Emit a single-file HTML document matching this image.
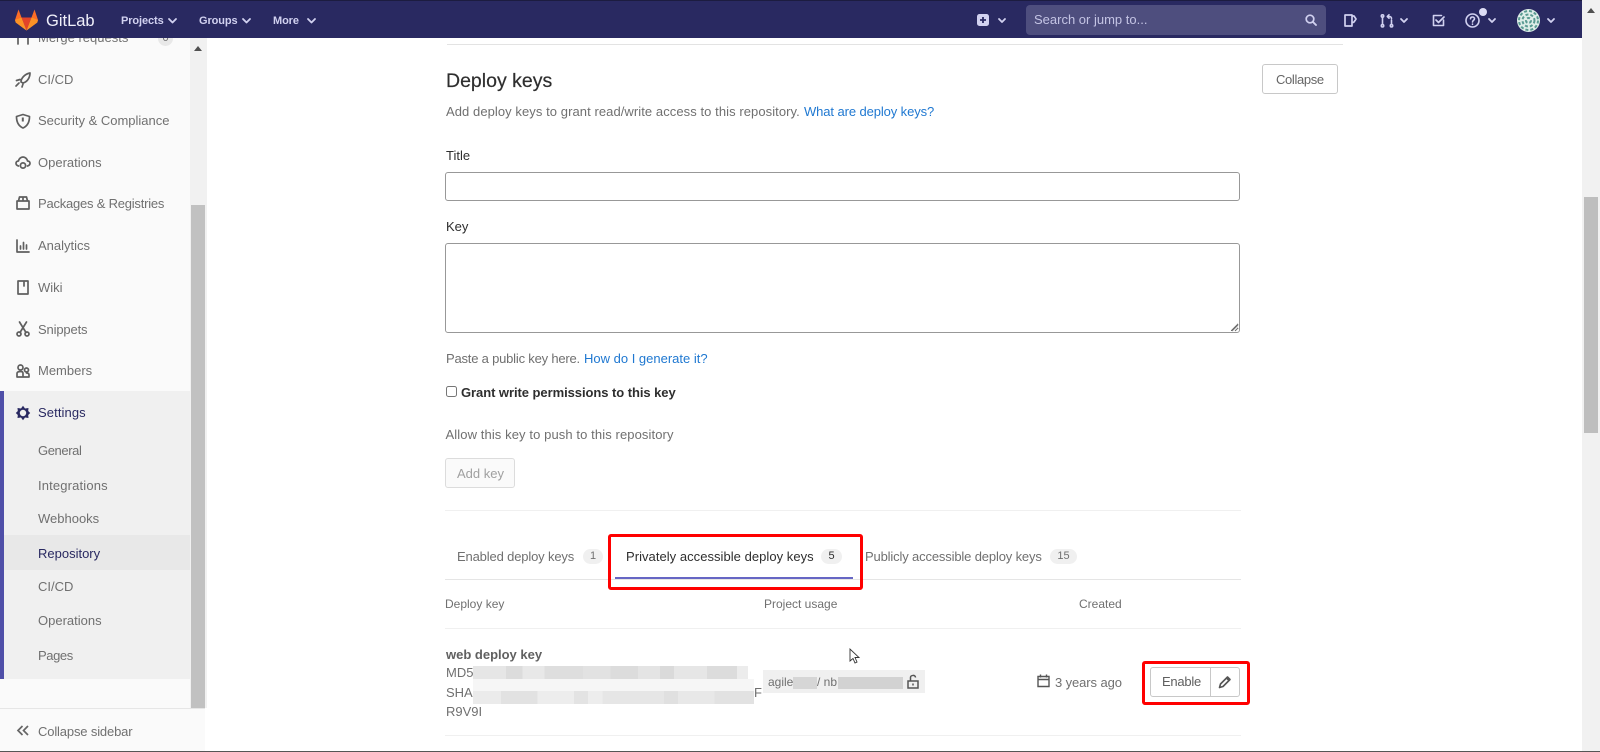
<!DOCTYPE html>
<html lang="en">
<head>
<meta charset="utf-8">
<title>Repository · Settings · GitLab</title>
<style>
*{box-sizing:border-box}
html,body{margin:0;padding:0;width:1600px;height:752px;overflow:hidden;background:#fff}
body{position:relative;font-family:"Liberation Sans",sans-serif;font-size:13px;color:#707070}
.t{position:absolute;line-height:20px;height:20px;white-space:nowrap}
a{color:#1f78d1;text-decoration:none}
svg{position:absolute;display:block;overflow:visible}
.box{position:absolute}
header{position:absolute;left:0;top:0;width:1583px;height:38px;background:#292961;border-top:1px solid #1c1c40;z-index:5}
header .t{color:#d1d1f0;font-size:11px;font-weight:bold;top:10px;letter-spacing:-.1px}
.chev{fill:none;stroke:#d1d1f0;stroke-width:1.8;stroke-linecap:round;stroke-linejoin:round}
.ic{fill:none;stroke:#d1d1f0;stroke-width:1.6;stroke-linecap:round;stroke-linejoin:round}
aside{position:absolute;left:0;top:0;width:207px;height:751px;background:#fff}
.nav{position:absolute;left:0;top:0;width:190px;height:708px;background:#fafafa}
aside .t{font-size:13px;color:#707070;left:38px}
.sn{fill:none;stroke:#5f5f5f;stroke-width:1.7;stroke-linecap:round;stroke-linejoin:round}
.main .t{font-size:13px}
input,textarea{position:absolute;margin:0;background:#fff;border:1px solid #989898;border-radius:3px;padding:0}
.hr{position:absolute;height:1px;background:#ececec}
.badge{position:absolute;height:15px;border-radius:8px;background:#f0f0f0;font-size:11px;line-height:15px;text-align:center;color:#707070}
.red{position:absolute;border:3px solid #f00;border-radius:3px;z-index:3}
</style>
</head>
<body>

<aside>
  <div class="nav"></div>
  <div class="box" style="left:0;top:391px;width:190px;height:288px;background:#f0f0f0"></div>
  <div class="box" style="left:0;top:391px;width:4px;height:288px;background:#4f4fa8"></div>
  <div class="box" style="left:4px;top:535px;width:186px;height:35px;background:#e8e8e8"></div>

  <svg style="left:16px;top:30px" width="14" height="14" viewBox="0 0 14 14"><path class="sn" d="M2 2v12M12 2v12"/></svg>
  <span class="t" style="top:28px">Merge requests</span>
  <div class="box" style="left:158px;top:31px;width:15px;height:15px;border-radius:8px;background:#e8e8e8;font-size:11px;line-height:15px;text-align:center">0</div>

  <svg style="left:15px;top:72px" width="16" height="16" viewBox="0 0 16 16"><path class="sn" d="M6 10C6 6 10 2 15 1c0 5-3 9-7 10zM1.500 8.500 5 7.500M1 14l3-3M7 15l1-3"/></svg>
  <span class="t" style="top:70px">CI/CD</span>

  <svg style="left:15px;top:113px" width="16" height="16" viewBox="0 0 16 16"><path class="sn" d="M8 1.500 14.500 3.500c0 6-2 9.500-6.500 11.500C3.500 13 1.500 9.500 1.500 3.500z"/><path d="M6.800 4.500h2v4h-2z" fill="#5f5f5f"/></svg>
  <span class="t" style="top:111px">Security &amp; Compliance</span>

  <svg style="left:15px;top:155px" width="16" height="16" viewBox="0 0 16 16"><path class="sn" d="M3.500 11C1.500 10.500 1 9.500 1 8.300 1 7 2 6 3.500 6 4 3.500 6 2 8 2s4 1.500 4.500 4C14 6 15 7 15 8.300c0 1.200-.5 2.200-2.500 2.700"/><circle cx="8" cy="10.500" r="2.600" class="sn"/></svg>
  <span class="t" style="top:153px">Operations</span>

  <svg style="left:16px;top:196px" width="14" height="14" viewBox="0 0 14 14"><path class="sn" d="M1 5h12v8H1zM2.500 5l1-4h7l1 4M7 1v4"/></svg>
  <span class="t" style="top:194px;letter-spacing:-.22px">Packages &amp; Registries</span>

  <svg style="left:16px;top:239px" width="14" height="14" viewBox="0 0 14 14"><path class="sn" d="M1 1v12h12M4.500 10V7M7.500 10V3.500M10.500 10V6"/></svg>
  <span class="t" style="top:236px">Analytics</span>

  <svg style="left:17px;top:280px" width="12" height="15" viewBox="0 0 12 15"><path class="sn" d="M1 1h10v13H1zM7 1v5"/></svg>
  <span class="t" style="top:278px">Wiki</span>

  <svg style="left:16px;top:321px" width="14" height="16" viewBox="0 0 14 16"><circle class="sn" cx="3" cy="13" r="2"/><circle class="sn" cx="11" cy="13" r="2"/><path class="sn" d="M4 11.500 10.500 1M10 11.500 3.500 1"/></svg>
  <span class="t" style="top:320px;letter-spacing:-.15px">Snippets</span>

  <svg style="left:16px;top:364px" width="14" height="14" viewBox="0 0 14 14"><circle class="sn" cx="4.500" cy="3.500" r="2.500"/><circle class="sn" cx="10.500" cy="6" r="2"/><path class="sn" d="M1 13V9.500C1 8 2.500 7.500 4.500 7.500S7 8 7 9.500V13zM7 13h6v-2c0-1.500-1-2-2.500-2"/></svg>
  <span class="t" style="top:361px">Members</span>

  <svg style="left:15px;top:405px" width="16" height="16" viewBox="0 0 16 16">
    <path d="M8 0.800 10 3.500 13.500 3 13.200 6 15.200 8 13.200 10 13.500 13 10 12.500 8 15.200 6 12.500 2.500 13 2.800 10 .8 8 2.800 6 2.500 3 6 3.500z" fill="#292961"/>
    <circle cx="8" cy="8" r="3.200" fill="#f0f0f0"/>
  </svg>
  <span class="t" style="top:403px;color:#292961;letter-spacing:.1px">Settings</span>
  <span class="t" style="top:441px;letter-spacing:-.4px">General</span>
  <span class="t" style="top:476px;letter-spacing:.15px">Integrations</span>
  <span class="t" style="top:509px">Webhooks</span>
  <span class="t" style="top:544px;color:#292961">Repository</span>
  <span class="t" style="top:577px">CI/CD</span>
  <span class="t" style="top:611px">Operations</span>
  <span class="t" style="top:646px;letter-spacing:-.4px">Pages</span>

  <div class="box" style="left:190px;top:38px;width:17px;height:670px;background:#f1f1f1"></div>
  <div class="box" style="left:191px;top:205px;width:14px;height:503px;background:#c1c1c1"></div>
  <svg style="left:194px;top:46px" width="8" height="5" viewBox="0 0 8 5"><path d="M0 5 4 0l4 5z" fill="#505050"/></svg>

  <div class="box" style="left:0;top:708px;width:205px;height:43px;background:#fafafa;border-top:1px solid #e6e6e6"></div>
  <svg style="left:17px;top:725px" width="12" height="11" viewBox="0 0 12 11"><path d="M5.500 1 1 5.500 5.500 10M11 1 6.500 5.500 11 10" fill="none" stroke="#666" stroke-width="1.700"/></svg>
  <span class="t" style="top:722px;letter-spacing:-.15px">Collapse sidebar</span>
</aside>

<header>
  <svg style="left:15px;top:8px" width="23" height="22" viewBox="0 0 23 22">
    <path d="M11.500 21.500 0.700 13.500 0 11 3.500 0.500 6.500 8.500z" fill="#fc6d26"/>
    <path d="M11.500 21.500 22.300 13.500 23 11 19.500 0.500 16.500 8.500z" fill="#fc6d26"/>
    <path d="M11.500 21.500 6.500 8.500H16.500z" fill="#e24329"/>
    <path d="M0 11 6.500 8.500 11.500 21.500 0.700 13.500zM23 11 16.500 8.500 11.500 21.500 22.300 13.500z" fill="#fca326" opacity=".7"/>
  </svg>
  <span class="t" style="left:46px;font-size:16.500px;font-weight:normal;letter-spacing:0;color:#f0f0fa">GitLab</span>
  <span class="t" style="left:121px">Projects</span>
  <svg class="chev" style="left:168px;top:17px" width="9" height="6" viewBox="0 0 9 6"><path d="M1 1l3.500 3.500L8 1"/></svg>
  <span class="t" style="left:199px">Groups</span>
  <svg class="chev" style="left:242px;top:17px" width="9" height="6" viewBox="0 0 9 6"><path d="M1 1l3.500 3.500L8 1"/></svg>
  <span class="t" style="left:273px">More</span>
  <svg class="chev" style="left:307px;top:17px" width="9" height="6" viewBox="0 0 9 6"><path d="M1 1l3.500 3.500L8 1"/></svg>

  <svg style="left:977px;top:13px" width="12" height="12" viewBox="0 0 12 12"><rect width="12" height="12" rx="2.500" fill="#d1d1f0"/><path d="M6 3v6M3 6h6" stroke="#292961" stroke-width="1.800"/></svg>
  <svg class="chev" style="left:998px;top:17px" width="8" height="6" viewBox="0 0 8 6"><path d="M1 1l3 3 3-3"/></svg>

  <div class="box" style="left:1026px;top:4px;width:300px;height:30px;border-radius:4px;background:#4e4e7e"></div>
  <span class="t" style="left:1034px;top:9px;font-size:13px;font-weight:normal;letter-spacing:0;color:#c4c4e4">Search or jump to...</span>
  <svg class="ic" style="left:1305px;top:13px" width="12" height="12" viewBox="0 0 12 12"><circle cx="5" cy="5" r="3.800" stroke-width="1.700"/><path d="M8 8l3 3" stroke-width="1.900"/></svg>

  <svg class="ic" style="left:1344px;top:13px" width="13" height="13" viewBox="0 0 13 13"><path d="M1 1h7v11H1zM8 2h2l2 3-2 3-2 1" stroke-width="1.700"/></svg>
  <svg class="ic" style="left:1380px;top:13px" width="14" height="14" viewBox="0 0 14 14"><path d="M2.500 3v7M11.500 6v4M11.500 4.500C11.500 3 10.500 2.500 9 2.500H7.500M9 .8 7.300 2.500 9 4.200"/><circle cx="2.500" cy="2" r="1.200"/><circle cx="2.500" cy="11.800" r="1.200"/><circle cx="11.500" cy="11.800" r="1.200"/></svg>
  <svg class="chev" style="left:1400px;top:17px" width="8" height="6" viewBox="0 0 8 6"><path d="M1 1l3 3 3-3"/></svg>
  <svg class="ic" style="left:1432px;top:13px" width="13" height="13" viewBox="0 0 13 13"><path d="M11.500 6v5.500h-10v-10H9.500"/><path d="M4 6l2.500 2.500L12 3" stroke-width="1.700"/></svg>
  <svg class="ic" style="left:1465px;top:12px" width="15" height="15" viewBox="0 0 15 15"><circle cx="7.500" cy="7.500" r="6.500"/><path d="M5.500 5.800C5.500 4.500 6.500 4 7.500 4s2 .7 2 1.800c0 1.500-2 1.500-2 3.200"/><path d="M7.500 11v.3"/></svg>
  <div class="box" style="left:1479px;top:7px;width:8px;height:8px;border-radius:50%;background:#dcdcf5"></div>
  <svg class="chev" style="left:1488px;top:17px" width="8" height="6" viewBox="0 0 8 6"><path d="M1 1l3 3 3-3"/></svg>

  <svg style="left:1517px;top:8px" width="23" height="23" viewBox="0 0 23 23">
    <circle cx="11.500" cy="11.500" r="11.500" fill="#dfeee9"/>
    <g fill="none" stroke="#5a9b92" stroke-width="2" stroke-dasharray="3 2">
      <circle cx="11.500" cy="11.500" r="9.500"/><circle cx="11.500" cy="11.500" r="6"/><circle cx="11.500" cy="11.500" r="2.500"/>
    </g>
  </svg>
  <svg class="chev" style="left:1547px;top:17px" width="8" height="6" viewBox="0 0 8 6"><path d="M1 1l3 3 3-3"/></svg>
</header>

<div class="box" style="left:1582px;top:0;width:18px;height:751px;background:#f1f1f1;z-index:6"></div>
<div class="box" style="left:1584px;top:197px;width:14px;height:236px;background:#bebebe;z-index:6"></div>
<svg style="left:1587px;top:8px;z-index:6" width="8" height="5" viewBox="0 0 8 5"><path d="M0 5 4 0l4 5z" fill="#505050"/></svg>

<main class="main">
  <div class="hr" style="left:447px;top:44px;width:896px;background:#e3e3e3"></div>
  <h2 class="t" style="left:446px;top:71px;margin:0;font-size:19.500px;font-weight:normal;color:#2e2e2e;-webkit-text-stroke:.2px #2e2e2e">Deploy keys</h2>
  <div class="box" style="left:1262px;top:64px;width:76px;height:30px;border:1px solid #c8c8c8;border-radius:3px"></div>
  <span class="t" style="left:1276px;top:70px;color:#666;letter-spacing:-.35px">Collapse</span>
  <span class="t" style="left:446px;top:102px;letter-spacing:.07px">Add deploy keys to grant read/write access to this repository.</span>
  <a class="t" href="#" style="left:804px;top:102px;letter-spacing:-.1px">What are deploy keys?</a>

  <span class="t" style="left:446px;top:146px;color:#2e2e2e">Title</span>
  <input type="text" style="left:445px;top:172px;width:795px;height:29px">
  <span class="t" style="left:446px;top:217px;color:#2e2e2e">Key</span>
  <textarea style="left:445px;top:243px;width:795px;height:90px"></textarea>
  <svg style="left:1231px;top:324px" width="8" height="8" viewBox="0 0 8 8"><path d="M7 1 1 7M7 4 4 7" stroke="#777" stroke-width="1" fill="none"/></svg>
  <span class="t" style="left:446px;top:349px;letter-spacing:-.2px">Paste a public key here.</span>
  <a class="t" href="#" style="left:584px;top:349px">How do I generate it?</a>

  <input type="checkbox" style="left:446px;top:386px;width:11px;height:11px;border:1px solid #777">
  <span class="t" style="left:461px;top:383px;color:#2e2e2e;font-weight:bold;letter-spacing:-.06px">Grant write permissions to this key</span>
  <span class="t" style="left:445.500px;top:425px;letter-spacing:.1px">Allow this key to push to this repository</span>
  <div class="box" style="left:445px;top:458px;width:70px;height:30px;border:1px solid #dcdcdc;border-radius:3px;background:#fafafa"></div>
  <span class="t" style="left:457px;top:464px;color:#a0a0a0">Add key</span>
  <div class="hr" style="left:445px;top:510px;width:796px;background:#f0f0f0"></div>

  <span class="t" style="left:457px;top:547px;letter-spacing:-.15px">Enabled deploy keys</span>
  <div class="badge" style="left:583px;top:549px;width:20px">1</div>
  <span class="t" style="left:626px;top:547px;color:#2e2e2e;letter-spacing:.04px">Privately accessible deploy keys</span>
  <div class="badge" style="left:821px;top:549px;width:21px;color:#2e2e2e">5</div>
  <span class="t" style="left:865px;top:547px;letter-spacing:-.15px">Publicly accessible deploy keys</span>
  <div class="badge" style="left:1050px;top:549px;width:27px">15</div>
  <div class="hr" style="left:445px;top:579px;width:796px;background:#e5e5e5"></div>
  <div class="box" style="left:615px;top:577px;width:238px;height:2px;background:#6666c4"></div>
  <div class="red" style="left:608px;top:534px;width:255px;height:56px"></div>

  <span class="t" style="left:445px;top:594px;font-size:12px">Deploy key</span>
  <span class="t" style="left:764px;top:594px;font-size:12px">Project usage</span>
  <span class="t" style="left:1079px;top:594px;font-size:12px">Created</span>
  <div class="hr" style="left:445px;top:628px;width:796px;background:#f0f0f0"></div>

  <span class="t" style="left:446px;top:645px;font-weight:bold;color:#606060">web deploy key</span>
  <span class="t" style="left:446px;top:663px">MD5</span>
  <span class="t" style="left:446px;top:683px">SHA2</span>
  <span class="t" style="left:754px;top:683px">F</span>
  <span class="t" style="left:446px;top:702px">R9V9I</span>
  <div class="box" style="left:473px;top:666px;width:275px;height:13px;background:linear-gradient(90deg,#e6e6e6 0 12%,#dcdcdc 12% 18%,#e8e8e8 18% 26%,#dedede 26% 40%,#e2e2e2 40% 50%,#dcdcdc 50% 60%,#e4e4e4 60% 68%,#dadada 68% 73%,#e6e6e6 73% 85%,#dcdcdc 85% 96%,#ececec 96%)"></div>
  <div class="box" style="left:473px;top:679px;width:281px;height:12px;background:#f6f6f6"></div>
  <div class="box" style="left:473px;top:691px;width:281px;height:13px;background:linear-gradient(90deg,#ebebeb 0 10%,#e2e2e2 10% 23%,#ededed 23% 36%,#e3e3e3 36% 41%,#ededed 41% 46%,#e6e6e6 46% 68%,#e0e0e0 68% 73%,#e8e8e8 73% 86%,#e2e2e2 86% 100%)"></div>

  <div class="box" style="left:763px;top:670px;width:162px;height:23px;background:#f0f0f0"></div>
  <span class="t" style="left:768px;top:672px;font-size:12px">agile</span>
  <div class="box" style="left:793px;top:677px;width:24px;height:12px;background:#d6d6d6"></div>
  <span class="t" style="left:817px;top:672px;font-size:12px">/ nb</span>
  <div class="box" style="left:838px;top:677px;width:65px;height:12px;background:#d2d2d2"></div>
  <svg style="left:907px;top:674px" width="12" height="15" viewBox="0 0 12 15"><path d="M1 7h10v7H1zM3.500 7V3.500C3.500 1 8.500 .5 8.500 3.500" fill="none" stroke="#555" stroke-width="1.500"/><path d="M6 9.500v2" stroke="#555" stroke-width="1.500"/></svg>

  <svg style="left:1037px;top:674px" width="13" height="13" viewBox="0 0 13 13"><path d="M1 2.500h11v10H1zM1 5.500h11M3.500 .5v3M9.500 .5v3" fill="none" stroke="#555" stroke-width="1.400"/></svg>
  <span class="t" style="left:1055px;top:673px;letter-spacing:-.1px">3 years ago</span>

  <div class="box" style="left:1150px;top:667px;width:90px;height:30px;border:1px solid #c8c8c8;border-radius:3px"></div>
  <div class="box" style="left:1210px;top:667px;width:1px;height:30px;background:#c8c8c8"></div>
  <span class="t" style="left:1162px;top:672px;color:#606060;letter-spacing:-.25px">Enable</span>
  <svg style="left:1218px;top:675px" width="14" height="14" viewBox="0 0 14 14"><path d="M1.500 12.500 2.500 9 9.500 2 12 4.500 5 11.500zM8.500 3 11 5.500" fill="none" stroke="#555" stroke-width="1.600" stroke-linejoin="round"/></svg>
  <div class="red" style="left:1142px;top:661px;width:108px;height:44px"></div>

  <div class="hr" style="left:445px;top:735px;width:796px;background:#f0f0f0"></div>
  <svg style="left:849px;top:648px" width="11" height="17" viewBox="0 0 11 17"><path d="M1 1v12l3-2.500 2 4.500 2-1-2-4.500h4z" fill="#fff" stroke="#333" stroke-width=".9"/></svg>
</main>

<div class="box" style="left:0;top:751px;width:1600px;height:1px;background:#555;z-index:7"></div>
</body>
</html>
